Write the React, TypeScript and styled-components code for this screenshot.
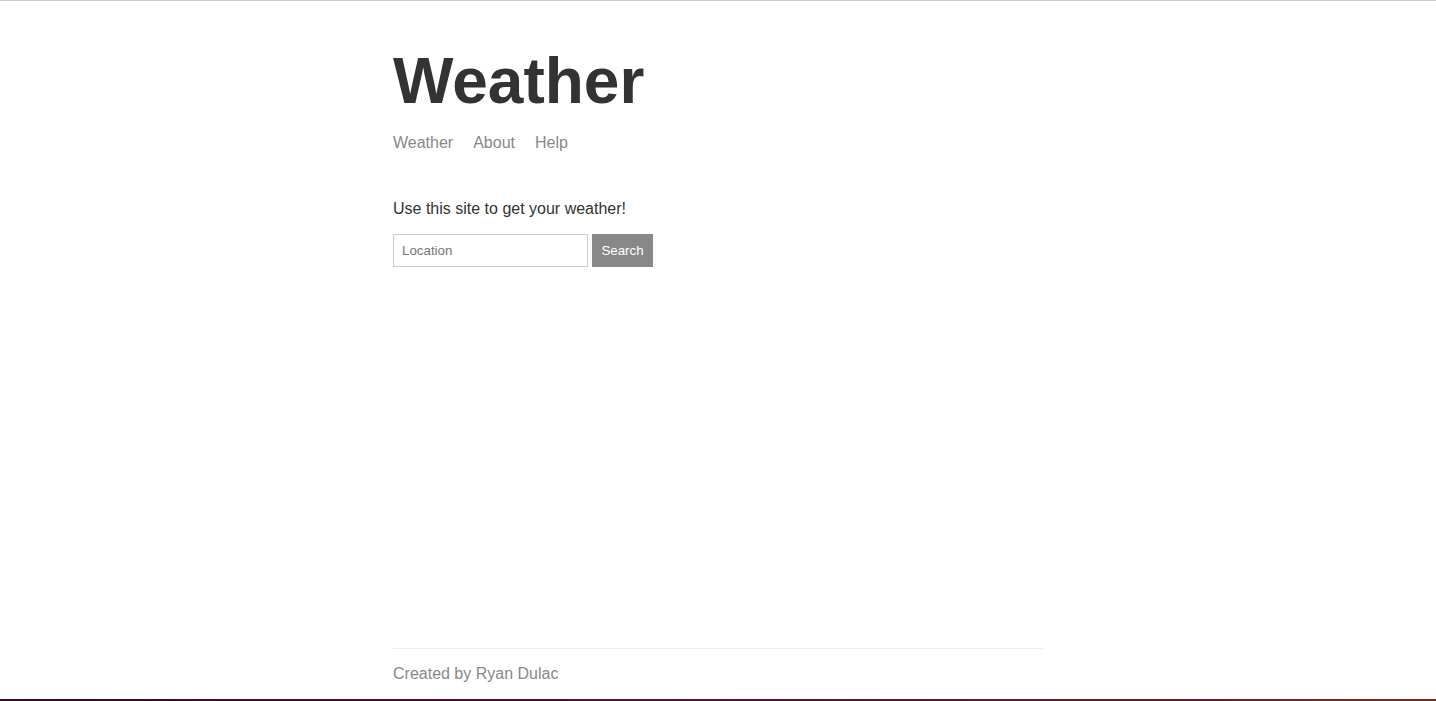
import styled, { createGlobalStyle } from "styled-components";

const GlobalStyle = createGlobalStyle`
	html, body {
		margin: 0;
		padding: 0;
		height: 100%;
		background: #fff;
	}
	#root {
		height: 100%;
	}
`;

const Screen = styled.div`
	display: flex;
	flex-direction: column;
	height: 100vh;
	border-top: 1px solid #cccccc;
	box-sizing: border-box;
`;

const Page = styled.div`
	flex: 1;
	display: flex;
	flex-direction: column;
	width: 650px;
	margin: 0 auto;
	padding: 0 16px;
	color: #333;
	font-family: "Liberation Sans", Arial, sans-serif;
`;

const Header = styled.header`
	padding-top: 43px;
	margin-bottom: 48px;
`;

const Title = styled.h1`
	margin: 0 0 16px;
	font-size: 64px;
	line-height: 74px;
	font-weight: bold;
	color: #333;
`;

const Nav = styled.nav`
	display: flex;
	gap: 20px;
	line-height: 18px;
`;

const NavLink = styled.a`
	color: #888;
	font-size: 16px;
	text-decoration: none;
	cursor: pointer;
`;

const Main = styled.main`
	flex-grow: 1;
`;

const Intro = styled.p`
	margin: 0 0 16px;
	font-size: 16px;
	line-height: 18px;
`;

const SearchForm = styled.form`
	display: flex;
	gap: 4px;
`;

const LocationInput = styled.input`
	box-sizing: border-box;
	width: 195px;
	height: 33px;
	padding: 8px;
	border: 1px solid #ccc;
	font-family: "Liberation Sans", Arial, sans-serif;
	font-size: 13.33px;
	color: #333;
	outline: none;

	&::placeholder {
		color: #757575;
	}
`;

const SearchButton = styled.button`
	box-sizing: border-box;
	width: 61px;
	height: 33px;
	padding: 8px;
	border: 1px solid #888;
	background: #888;
	color: #fff;
	font-family: "Liberation Sans", Arial, sans-serif;
	font-size: 13.33px;
	cursor: pointer;
`;

const Footer = styled.footer`
	border-top: 1px solid #eee;
	padding: 16px 0;
	color: #888;
	font-size: 16px;
	line-height: 18px;
`;

const TaskStrip = styled.div`
	height: 2px;
	flex-shrink: 0;
	background: linear-gradient(90deg, #3a0820 0%, #4a0c28 25%, #5a1232 50%, #6a1a2c 80%, #7a2a1c 100%);
`;

const App = () => (
	<>
		<GlobalStyle />
		<Screen>
			<Page>
				<Header>
					<Title>Weather</Title>
					<Nav>
						<NavLink href="#">Weather</NavLink>
						<NavLink href="#">About</NavLink>
						<NavLink href="#">Help</NavLink>
					</Nav>
				</Header>
				<Main>
					<Intro>Use this site to get your weather!</Intro>
					<SearchForm onSubmit={(e) => e.preventDefault()}>
						<LocationInput placeholder="Location" />
						<SearchButton type="submit">Search</SearchButton>
					</SearchForm>
				</Main>
				<Footer>Created by Ryan Dulac</Footer>
			</Page>
			<TaskStrip />
		</Screen>
	</>
);

export default App;
